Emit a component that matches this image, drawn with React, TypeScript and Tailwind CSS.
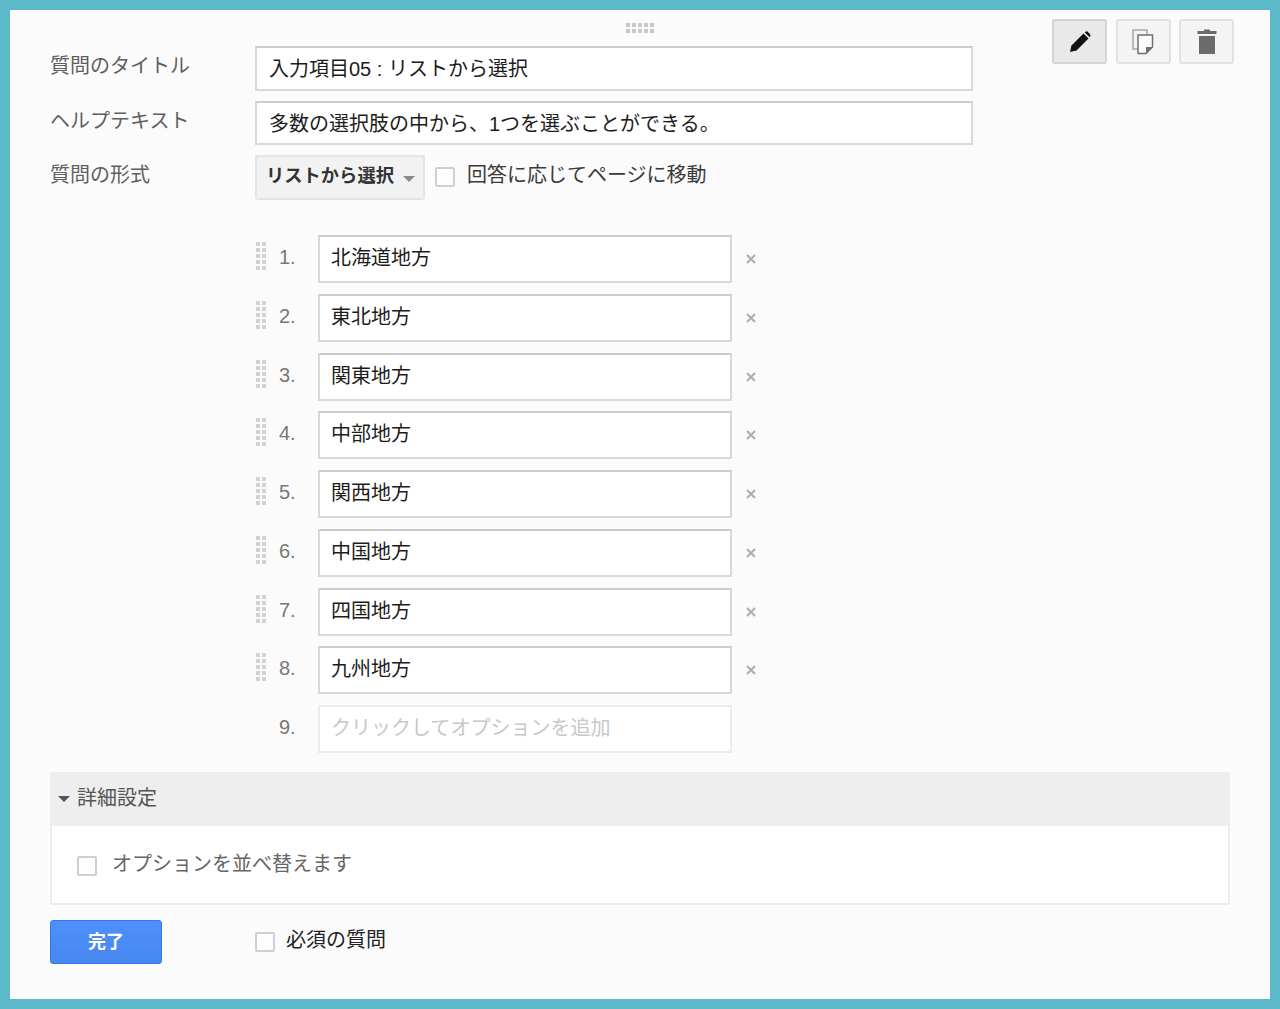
import React from "react";

const font = "font-['Liberation_Sans','Noto_Sans_CJK_JP',sans-serif]";

const options = [
  "北海道地方",
  "東北地方",
  "関東地方",
  "中部地方",
  "関西地方",
  "中国地方",
  "四国地方",
  "九州地方",
];

const Checkbox = () => (
  <span className="block w-5 h-5 shrink-0 bg-[#fdfdfd] border-2 border-[#cfcfcf] rounded-[2px]" />
);

const Grip = () => (
  <svg width="12" height="30" viewBox="0 0 12 30" fill="#d2d2d2" className="block">
    {[1, 7, 13, 19, 25].map((y) => (
      <g key={y}>
        <rect x="1" y={y} width="4" height="4" />
        <rect x="7" y={y} width="4" height="4" />
      </g>
    ))}
  </svg>
);

const Row = ({ label, children }: { label: string; children: React.ReactNode }) => (
  <div className="flex items-start">
    <div className="w-[205px] shrink-0 text-[20px] leading-[41.5px] text-[#5f5f5f]">{label}</div>
    {children}
  </div>
);

const TextBox = ({ value }: { value: string }) => (
  <div className="w-[718px] h-[44.5px] bg-white border-2 border-[#d9d9d9] border-t-[#cccccc] pl-[12px] text-[20px] leading-[42.5px] text-[#1c1c1c]">
    {value}
  </div>
);

const ToolButton = ({ active, children }: { active?: boolean; children: React.ReactNode }) => (
  <div
    className={
      active
        ? "w-[55px] h-[45px] flex items-center justify-center rounded-[3px] border-2 border-[#d4d4d4] bg-[#e9e9e9]"
        : "w-[55px] h-[45px] flex items-center justify-center rounded-[3px] border-2 border-[#e2e2e2] bg-[#f4f4f4]"
    }
  >
    {children}
  </div>
);

export default function App() {
  return (
    <div className={`${font} w-[1280px] h-[1009px] bg-[#5bb9c9] p-[10px] overflow-hidden`}>
      <div className="relative h-[989px] bg-[#fbfbfb] pl-[40px] pr-[40px] pt-[36px]">
        <svg width="30" height="11" viewBox="0 0 30 11" fill="#c8c8c8" className="absolute left-[615px] top-[12px]">
          {[1, 7, 13, 19, 25].map((x) => (
            <g key={x}>
              <rect x={x} y="1" width="4" height="4" />
              <rect x={x} y="7" width="4" height="4" />
            </g>
          ))}
        </svg>

        <div className="absolute top-[9px] left-[1042px] flex gap-[8.5px]">
          <ToolButton active>
            <svg width="22" height="22" viewBox="0 0 22 22" fill="#111">
              <path d="M1 21 L2.5 14.5 L14.5 2.5 L19.5 7.5 L7.5 19.5 Z" />
              <path d="M15.8 1.4 L17 0.6 C17.6 0.2 18.2 0.3 18.7 0.8 L21.2 3.3 C21.7 3.8 21.7 4.4 21.3 5 L20.6 6.2 Z" />
            </svg>
          </ToolButton>
          <ToolButton>
            <svg width="22" height="26" viewBox="0 0 22 26">
              <path d="M1 1 H15 V20 H1 Z" fill="#f4f4f4" stroke="#a8a8a8" strokeWidth="1.5" />
              <path d="M6 6 H20.5 V18 L14 24.5 H6 Z" fill="#fbfbfb" stroke="#6f6f6f" strokeWidth="1.5" />
              <path d="M14 24.5 V18 H20.5 Z" fill="#6f6f6f" />
            </svg>
          </ToolButton>
          <ToolButton>
            <svg width="20" height="26" viewBox="0 0 20 26" fill="#6b6b6b">
              <rect x="7" y="0.5" width="6" height="2" />
              <rect x="0.5" y="2" width="19" height="3" />
              <rect x="2" y="7" width="16" height="18" />
            </svg>
          </ToolButton>
        </div>

        <div className="flex flex-col gap-[10px]">
          <Row label="質問のタイトル">
            <TextBox value="入力項目05 : リストから選択" />
          </Row>
          <Row label="ヘルプテキスト">
            <TextBox value="多数の選択肢の中から、1つを選ぶことができる。" />
          </Row>
          <Row label="質問の形式">
            <div className="flex items-center">
              <div className="w-[170px] h-[45px] flex items-center pl-[9px] rounded-[3px] border-2 border-[#e4e4e4] bg-[#f2f2f2]">
                <span className="mb-[3px] text-[18.3px] font-bold text-[#333] whitespace-nowrap">リストから選択</span>
                <span className="ml-[9px] mt-[3px] w-0 h-0 border-x-[6px] border-x-transparent border-t-[6px] border-t-[#8a8a8a]" />
              </div>
              <span className="ml-[10px] mb-[1px]">
                <Checkbox />
              </span>
              <span className="ml-[12px] mb-[6px] text-[20px] text-[#3a3a3a] whitespace-nowrap">回答に応じてページに移動</span>
            </div>
          </Row>
        </div>

        <div className="mt-[35px] ml-[205px] flex flex-col gap-[10.75px]">
          {options.map((name, i) => (
            <div key={name} className="flex items-center h-[48px]">
              <div className="w-[24px] mb-[6px]">
                <Grip />
              </div>
              <div className="w-[39px] mb-[4px] text-[20px] text-[#777] tracking-[-0.2px]">{i + 1}.</div>
              <div className="w-[414px] h-[48px] bg-white border-2 border-[#d9d9d9] border-t-[#cccccc] pl-[11px] text-[20px] leading-[42.5px] text-[#1c1c1c]">
                {name}
              </div>
              <div className="ml-[14px]">
                <svg width="10" height="10" viewBox="0 0 10 10" stroke="#adadad" strokeWidth="2" className="block">
                  <path d="M1 1 L9 9 M9 1 L1 9" />
                </svg>
              </div>
            </div>
          ))}
          <div className="flex items-center h-[48px]">
            <div className="w-[63px] pl-[24px] mb-[4px] text-[20px] text-[#777]">9.</div>
            <div className="w-[414px] h-[48px] bg-white border-2 border-[#ececec] pl-[11px] text-[20px] leading-[42.5px] text-[#c8c8c8]">
              クリックしてオプションを追加
            </div>
          </div>
        </div>

        <div className="mt-[19px] w-[1180px] border-2 border-t-0 border-[#ededed]">
          <div className="h-[54px] -mx-[2px] bg-[#eeeeee] flex items-center pl-[8px]">
            <span className="w-0 h-0 border-x-[6px] border-x-transparent border-t-[6px] border-t-[#555]" />
            <span className="ml-[7px] mb-[2px] text-[20px] text-[#555]">詳細設定</span>
          </div>
          <div className="h-[77px] bg-white flex items-start pl-[25px]">
            <span className="mt-[30px]">
              <Checkbox />
            </span>
            <span className="ml-[15px] mt-[23px] text-[20px] text-[#666]">オプションを並べ替えます</span>
          </div>
        </div>

        <div className="mt-[15px] flex items-start">
          <div className="w-[112px] h-[44px] rounded-[3px] border border-[#3079ed] bg-gradient-to-b from-[#4d90fe] to-[#4787ed] flex items-center justify-center text-[18px] font-bold text-white">
            完了
          </div>
          <span className="ml-[93px] mt-[12px]">
            <Checkbox />
          </span>
          <span className="ml-[11px] mt-[5px] text-[20px] text-[#222]">必須の質問</span>
        </div>
      </div>
    </div>
  );
}
